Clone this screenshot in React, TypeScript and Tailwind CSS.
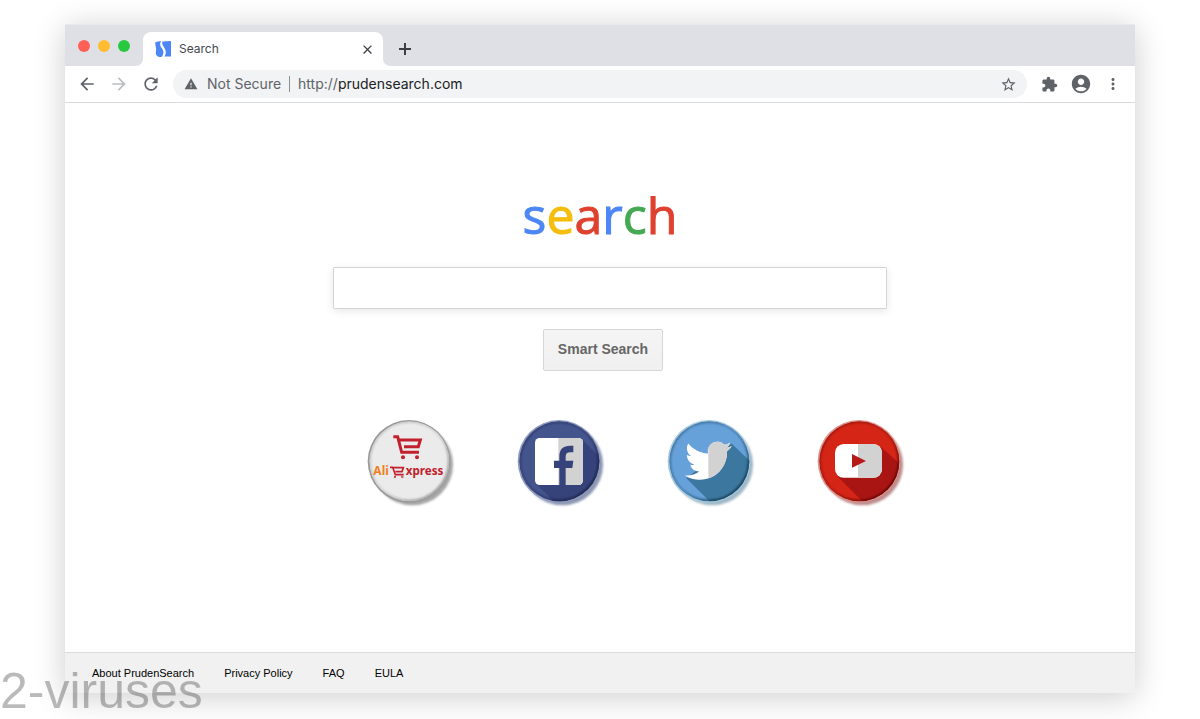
import type { ReactNode } from "react";
import {
  MdAccountCircle,
  MdArrowBack,
  MdArrowForward,
  MdClose,
  MdExtension,
  MdMoreVert,
  MdRefresh,
  MdStarBorder,
  MdWarning,
} from "react-icons/md";

const logo = [
  { char: "s", color: "text-[#4d87f5]" },
  { char: "e", color: "text-[#f5bd0c]" },
  { char: "a", color: "text-[#df412f]" },
  { char: "r", color: "text-[#4d87f5]" },
  { char: "c", color: "text-[#45a853]" },
  { char: "h", color: "text-[#df412f]" },
];

const footerLinks = ["About PrudenSearch", "Privacy Policy", "FAQ", "EULA"];

function Favicon() {
  return (
    <svg viewBox="0 0 16 16" className="size-4" aria-hidden="true">
      <path fill="#4d87f5" d="M.5 1 6 0C4.500 3 5 5 7 7.500c2 2.500 2 6-.5 8.500H4.500C2 15.500.8 14 .8 12c0-2 .6-3 .2-5C.5 5 0 3 .5 1Z" />
      <path fill="#4d87f5" d="M7.500.5 16 0v15.500H9.500c2-3 1.500-6 0-8.500C8 4.500 6.500 3 7.500.5Z" />
    </svg>
  );
}

function TabFoot({ flip = false }: { flip?: boolean }) {
  return (
    <svg viewBox="0 0 8 8" className="size-2 self-end" aria-hidden="true">
      <path fill="#fff" d={flip ? "M0 0v8h8C3 8 0 5 0 0Z" : "M8 0v8H0C5 8 8 5 8 0Z"} />
    </svg>
  );
}

function TabStrip() {
  return (
    <div className="flex h-[42px] items-center border-t border-[#e8e9ed] bg-[#dee0e6] pl-[13px]">
      <div className="flex gap-2">
        <span className="size-3 rounded-full bg-[#fe5f57]" />
        <span className="size-3 rounded-full bg-[#febc2e]" />
        <span className="size-3 rounded-full bg-[#28c840]" />
      </div>
      <div className="ml-[5px] flex self-end">
        <TabFoot />
        <div className="flex h-[34px] w-60 items-center rounded-t-lg bg-white pr-2 pl-3">
          <Favicon />
          <span className="ml-2 flex-1 text-xs text-[#45494d]">Search</span>
          <button aria-label="Close tab" className="text-[#3c4043]">
            <MdClose size={15} />
          </button>
        </div>
        <TabFoot flip />
      </div>
      <button aria-label="New tab" className="mt-[6px] ml-1 text-[#3c4043]">
        <svg viewBox="0 0 20 20" className="size-5" stroke="currentColor" strokeWidth="2">
          <path d="M4 10h12M10 4v12" />
        </svg>
      </button>
    </div>
  );
}

function Toolbar() {
  return (
    <div className="flex h-[37px] items-center border-b border-[#d8dadd] px-3 text-[#5f6368]">
      <div className="flex gap-3">
        <button aria-label="Back"><MdArrowBack size={20} /></button>
        <button aria-label="Forward" className="text-[#bbbdc0]"><MdArrowForward size={20} /></button>
        <button aria-label="Reload"><MdRefresh size={20} /></button>
      </div>
      <div className="ml-3 flex h-7 flex-1 items-center rounded-full bg-[#f1f3f4] px-[10px] text-sm">
        <span className="flex w-4 justify-center"><MdWarning size={14} /></span>
        <span className="ml-2">Not Secure</span>
        <span className="mx-2 h-4 w-px bg-[#8b8e92]" />
        <span className="flex-1">
          http://<span className="text-[#202124]">prudensearch.com</span>
        </span>
        <button aria-label="Bookmark this page"><MdStarBorder size={17} /></button>
      </div>
      <div className="ml-3 flex items-center gap-3">
        <button aria-label="Extensions" className="flex w-5 justify-center"><MdExtension size={17} /></button>
        <button aria-label="Profile" className="flex w-5 justify-center"><MdAccountCircle size={22} className="shrink-0" /></button>
        <button aria-label="Menu" className="flex w-5 justify-center"><MdMoreVert size={18} /></button>
      </div>
    </div>
  );
}

type BadgeProps = {
  id: string;
  label: string;
  light: string;
  fill: string;
  edge: string;
  shadow: string;
  shade?: string;
  shadeFill?: string;
  children: ReactNode;
};

function Badge({ id, label, light, fill, edge, shadow, shade, shadeFill, children }: BadgeProps) {
  return (
    <a href="#" aria-label={label}>
      <svg viewBox="0 0 330 315" className="h-[105px] w-[110px]">
        <defs>
          <linearGradient id={`${id}-rim`} x1="0" y1="0" x2="1" y2="1">
            <stop offset="0.1" stopColor={edge} stopOpacity="0.5" />
            <stop offset="0.5" stopColor={edge} stopOpacity="0.3" />
            <stop offset="0.9" stopColor={edge} />
          </linearGradient>
          <filter id={`${id}-blur`} x="-20%" y="-20%" width="140%" height="140%">
            <feGaussianBlur stdDeviation="3" />
          </filter>
          <clipPath id={`${id}-clip`}>
            <circle cx="163" cy="154" r="120" />
          </clipPath>
        </defs>
        <circle cx="172" cy="164" r="122" fill={shadow} filter={`url(#${id}-blur)`} />
        <circle cx="162" cy="154" r="124" fill={light} />
        <g clipPath={`url(#${id}-clip)`}>
          <circle cx="163" cy="154" r="121" fill={fill} />
          {shade && <path d={shade} fill={shadeFill} />}
          <circle cx="163" cy="154" r="119" fill="none" stroke={`url(#${id}-rim)`} strokeWidth="7" filter={`url(#${id}-blur)`} />
        </g>
        {children}
      </svg>
    </a>
  );
}

function Cart() {
  return (
    <g fill="none" stroke="#c1202c">
      <path d="M115 80h13l12 47h52" strokeWidth="9" />
      <path d="M128 90h68l-6 20h-43" strokeWidth="9" />
      <circle cx="144" cy="142" r="6" fill="#c1202c" stroke="none" />
      <circle cx="186" cy="142" r="6" fill="#c1202c" stroke="none" />
    </g>
  );
}

const birdPath =
  "M23.953 4.57a10 10 0 01-2.825.775 4.958 4.958 0 002.163-2.723c-.951.555-2.005.959-3.127 1.184a4.92 4.92 0 00-8.384 4.482C7.69 8.095 4.067 6.13 1.64 3.162a4.822 4.822 0 00-.666 2.475c0 1.71.87 3.213 2.188 4.096a4.904 4.904 0 01-2.228-.616v.06a4.923 4.923 0 003.946 4.827 4.996 4.996 0 01-2.212.085 4.936 4.936 0 004.604 3.417 9.867 9.867 0 01-6.102 2.105c-.39 0-.779-.023-1.17-.067a13.995 13.995 0 007.557 2.209c9.053 0 13.998-7.496 13.998-13.985 0-.21 0-.42-.015-.63A9.935 9.935 0 0024 4.59z";

function Shortcuts() {
  return (
    <nav className="mt-[39px] ml-[70px] flex gap-10">
      <Badge id="ali" label="AliExpress" light="#999" fill="#ebebec" edge="#8a8a8a" shadow="#a5a5a5">
        <Cart />
        <text x="55" y="194" fontSize="36" fontWeight="700" fill="#f08020" fontFamily="Noto Sans, sans-serif">Ali</text>
        <g fill="none" stroke="#c1202c" strokeWidth="5">
          <path d="M105 172h8l8 22h25" />
          <path d="M114 173h31l-4 12h-20" />
          <circle cx="120" cy="201" r="1" />
          <circle cx="142" cy="201" r="1" />
        </g>
        <text x="152" y="194" fontSize="35" fontWeight="700" fill="#c1202c" fontFamily="Noto Sans, sans-serif">xpress</text>
      </Badge>
      <Badge
        id="fb"
        label="Facebook"
        light="#8e9cc4"
        fill="#44548d"
        edge="#161d38"
        shadow="#8c96b1"
        shade="M94 222 230 88l100 98v130H188Z"
        shadeFill="#36427a"
      >
        <rect x="90" y="84" width="144" height="141" rx="14" fill="#fff" />
        <path d="M160 84h60a14 14 0 0 1 14 14v113a14 14 0 0 1-14 14h-60Z" fill="#d2d2d2" />
        <path d="M163 225v-51h-16v-22h16v-13c0-22 12-32 32-32h10v20h-9c-10 0-14 4-14 13v12h23l-3 22h-20v51Z" fill="#36427a" />
      </Badge>
      <Badge
        id="tw"
        label="Twitter"
        light="#a5c8df"
        fill="#66a1d9"
        edge="#0a2a3c"
        shadow="#9fb8c6"
        shade="M94 205 229 100l100 96v120H206Z"
        shadeFill="#3c779f"
      >
        <clipPath id="tw-half">
          <rect x="160" y="80" width="80" height="150" />
        </clipPath>
        <path d={birdPath} transform="translate(90 82) scale(5.85)" fill="#fff" />
        <g clipPath="url(#tw-half)">
          <path d={birdPath} transform="translate(90 82) scale(5.85)" fill="#d2d2d2" />
        </g>
      </Badge>
      <Badge
        id="yt"
        label="YouTube"
        light="#d9938d"
        fill="#d42516"
        edge="#4f0505"
        shadow="#bd8c8c"
        shade="M96 197 224 108l110 98v110H214Z"
        shadeFill="#a91513"
      >
        <rect x="90" y="102" width="141" height="101" rx="26" fill="#fff" />
        <path d="M159 102h46a26 26 0 0 1 26 26v49a26 26 0 0 1-26 26h-46Z" fill="#d2d2d2" />
        <path d="m141 132 42 21-42 20Z" fill="#b51a19" />
      </Badge>
    </nav>
  );
}

export default function App() {
  return (
    <div className="relative flex min-h-screen flex-col overflow-hidden bg-white px-[65px] pt-6 pb-[26px]">
      <div className="flex flex-1 flex-col bg-white font-['Inter',sans-serif] shadow-[0_4px_30px_rgba(0,0,0,0.2)]">
        <TabStrip />
        <Toolbar />

        <main className="flex flex-1 flex-col items-center pt-[82px]">
          <h1 className="font-['Open_Sans',sans-serif] text-[50px] leading-[60px] [-webkit-text-stroke:1px]">
            {logo.map((l, i) => (
              <span key={i} className={l.color}>{l.char}</span>
            ))}
          </h1>
          <form className="flex w-full flex-col items-center" onSubmit={(e) => e.preventDefault()}>
            <input
              type="text"
              aria-label="Search"
              className="mt-[22px] ml-5 h-[42px] w-full max-w-[554px] rounded-[1px] border border-[#d4d4d4] px-3 shadow-[0_2px_8px_rgba(0,0,0,0.1)] outline-none"
            />
            <button className="mt-5 ml-[6px] h-[42px] w-[120px] rounded-[2px] border border-[#d6d6d6] bg-linear-to-b from-[#f5f5f5] to-[#f0f0f0] pb-[2px] font-['Liberation_Sans',sans-serif] text-sm font-bold text-[#666]">
              Smart Search
            </button>
          </form>
          <Shortcuts />
        </main>

        <footer className="flex h-[41px] items-center gap-[30px] border-t border-[#dcdcdc] bg-[#f1f1f1] px-[27px] font-['Liberation_Sans',sans-serif] text-[11px] text-black">
          {footerLinks.map((link) => (
            <a key={link} href="#">{link}</a>
          ))}
        </footer>
      </div>

      <div className="pointer-events-none absolute bottom-0 left-0 font-['Liberation_Sans',sans-serif] text-[50px] leading-14 text-black/27">
        2-viruses
      </div>
    </div>
  );
}
